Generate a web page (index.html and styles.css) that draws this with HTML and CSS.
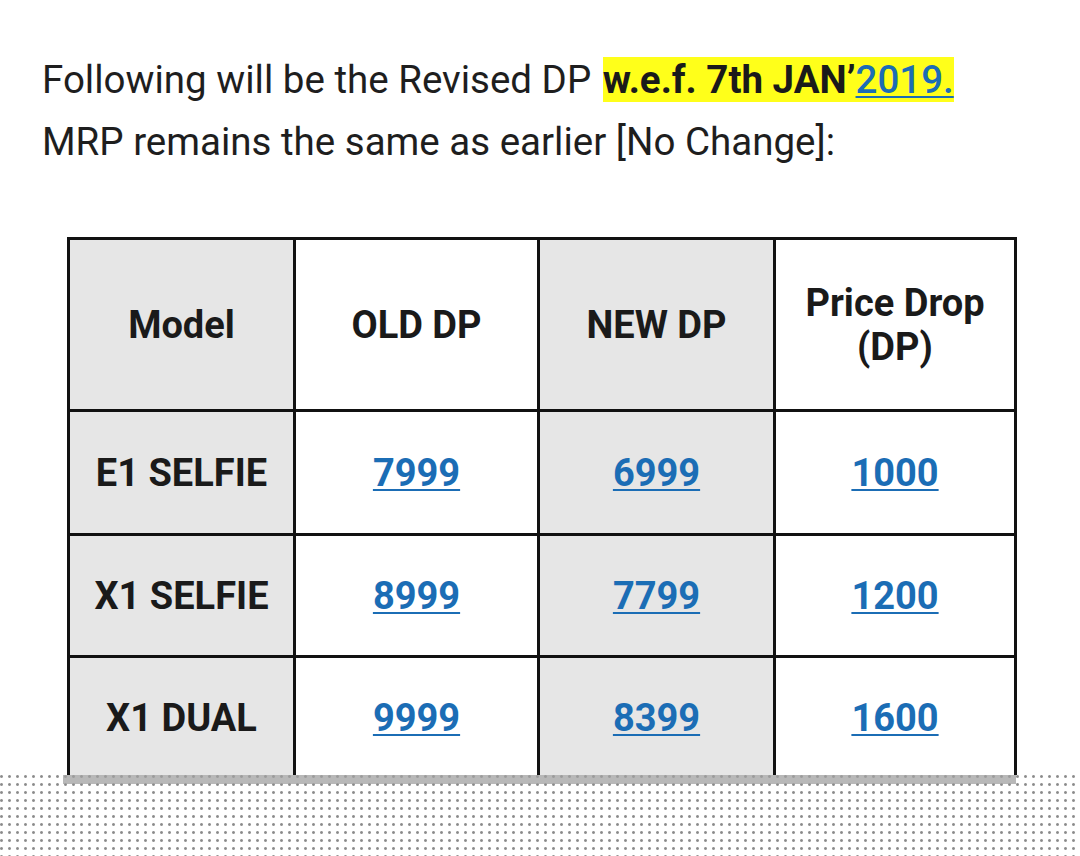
FILE: index.html
```html
<!DOCTYPE html>
<html>
<head>
<meta charset="utf-8">
<link rel="stylesheet" href="styles.css">
</head>
<body>
<div class="page">
  <div class="intro">
    <p class="line">Following will be the Revised DP <span class="hl"><b>w.e.f. 7th JAN’</b><a href="#" class="link">2019.</a></span></p>
    <p class="line">MRP remains the same as earlier [No Change]:</p>
  </div>
  <div class="table-clip">
    <table class="prices">
      <colgroup>
        <col class="c1"><col class="c2"><col class="c3"><col class="c4">
      </colgroup>
      <tr class="head">
        <th class="shade">Model</th>
        <th>OLD DP</th>
        <th class="shade">NEW DP</th>
        <th>Price Drop<br>(DP)</th>
      </tr>
      <tr class="r1">
        <th class="shade">E1 SELFIE</th>
        <td><a href="#" class="link">7999</a></td>
        <td class="shade"><a href="#" class="link">6999</a></td>
        <td><a href="#" class="link">1000</a></td>
      </tr>
      <tr class="r2">
        <th class="shade">X1 SELFIE</th>
        <td><a href="#" class="link">8999</a></td>
        <td class="shade"><a href="#" class="link">7799</a></td>
        <td><a href="#" class="link">1200</a></td>
      </tr>
      <tr class="r3">
        <th class="shade">X1 DUAL</th>
        <td><a href="#" class="link">9999</a></td>
        <td class="shade"><a href="#" class="link">8399</a></td>
        <td><a href="#" class="link">1600</a></td>
      </tr>
    </table>
  </div>
  <div class="dots">
    <div class="band"></div>
  </div>
</div>
</body>
</html>
```
FILE: styles.css
```css
html, body {
  margin: 0;
  padding: 0;
  background: #ffffff;
}
.page {
  width: 1080px;
  height: 856px;
  overflow: hidden;
  font-family: Roboto, "Liberation Sans", sans-serif;
  color: #1e1e1e;
}
.intro {
  padding: 49px 0 0 42px;
  height: 237px;
  box-sizing: border-box;
}
.line {
  margin: 0;
  font-size: 38.5px;
  line-height: 62px;
  white-space: nowrap;
}
.hl {
  background: #ffff1a;
  margin-left: 2px;
}
.hl b {
  font-weight: 700;
  color: #1a1a1a;
}
.link {
  color: #1b6db5;
  text-decoration: underline;
  text-decoration-thickness: 2px;
  text-underline-offset: 3px;
}
.hl .link {
  font-weight: 500;
}
.table-clip {
  height: 538px;
  overflow: hidden;
  padding-left: 67px;
}
.prices {
  border-collapse: collapse;
  table-layout: fixed;
  width: 947px;
}
.c1 { width: 226px; }
.c2 { width: 244px; }
.c3 { width: 236px; }
.c4 { width: 241px; }
.prices th, .prices td {
  border: 3px solid #111;
  padding: 0;
  text-align: center;
  vertical-align: middle;
  font-size: 38px;
  font-weight: 700;
  line-height: 44px;
  color: #1a1a1a;
}
.prices .link {
  font-weight: 700;
}
.shade {
  background: #e6e6e6;
}
.head { height: 172px; }
.r1 { height: 124px; }
.r2 { height: 122px; }
.r3 { height: 122px; }
.dots {
  height: 81px;
  background-image: radial-gradient(circle at 1.5px 1.5px, #8a8a8a 0.9px, rgba(140,140,140,0.4) 1.5px, transparent 2px);
  background-size: 8px 8px;
  background-position: 0 0;
}
.band {
  margin-left: 63px;
  width: 953px;
  height: 9px;
  background: rgba(160,160,160,0.75);
}
```
